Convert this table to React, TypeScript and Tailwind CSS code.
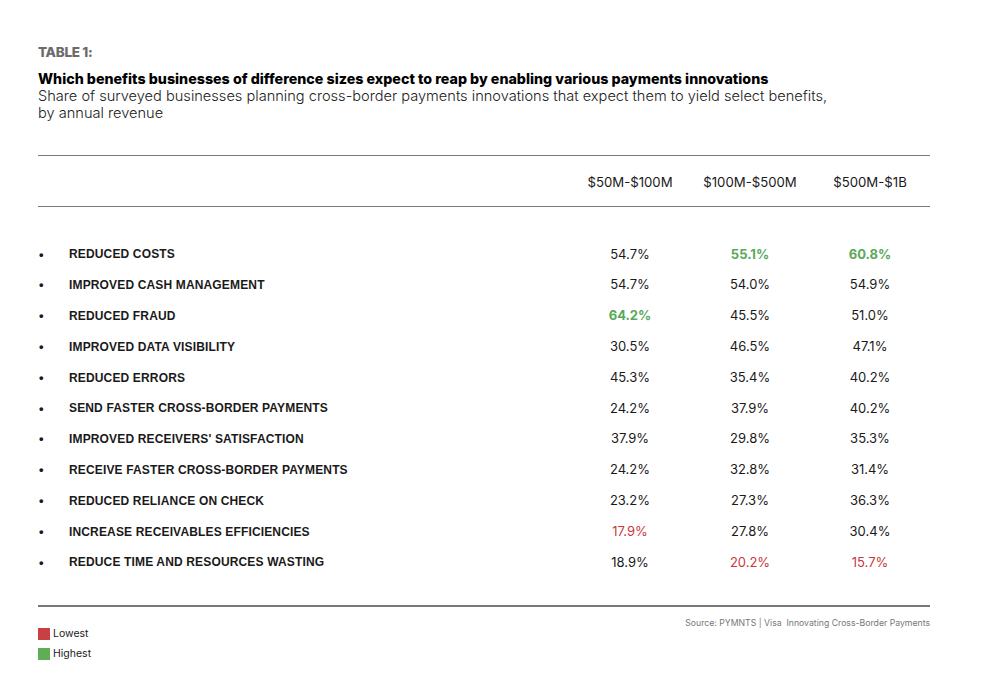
import { clsx } from 'clsx'

type Tone = 'low' | 'high' | undefined

interface Row {
  label: string
  values: [string, Tone][]
}

const rows: Row[] = [
  { label: 'REDUCED COSTS', values: [['54.7%', undefined], ['55.1%', 'high'], ['60.8%', 'high']] },
  { label: 'IMPROVED CASH MANAGEMENT', values: [['54.7%', undefined], ['54.0%', undefined], ['54.9%', undefined]] },
  { label: 'REDUCED FRAUD', values: [['64.2%', 'high'], ['45.5%', undefined], ['51.0%', undefined]] },
  { label: 'IMPROVED DATA VISIBILITY', values: [['30.5%', undefined], ['46.5%', undefined], ['47.1%', undefined]] },
  { label: 'REDUCED ERRORS', values: [['45.3%', undefined], ['35.4%', undefined], ['40.2%', undefined]] },
  { label: 'SEND FASTER CROSS-BORDER PAYMENTS', values: [['24.2%', undefined], ['37.9%', undefined], ['40.2%', undefined]] },
  { label: "IMPROVED RECEIVERS' SATISFACTION", values: [['37.9%', undefined], ['29.8%', undefined], ['35.3%', undefined]] },
  { label: 'RECEIVE FASTER CROSS-BORDER PAYMENTS', values: [['24.2%', undefined], ['32.8%', undefined], ['31.4%', undefined]] },
  { label: 'REDUCED RELIANCE ON CHECK', values: [['23.2%', undefined], ['27.3%', undefined], ['36.3%', undefined]] },
  { label: 'INCREASE RECEIVABLES EFFICIENCIES', values: [['17.9%', 'low'], ['27.8%', undefined], ['30.4%', undefined]] },
  { label: 'REDUCE TIME AND RESOURCES WASTING', values: [['18.9%', undefined], ['20.2%', 'low'], ['15.7%', 'low']] },
]

const columns = ['$50M-$100M', '$100M-$500M', '$500M-$1B']

const grid = 'grid grid-cols-[1fr_120px_120px_120px]'

export default function App() {
  return (
    <div className="min-h-[698px] w-[986px] bg-white pl-[38px] pr-[56px] pt-[44px] text-[#1a1a1a] font-['Inter',sans-serif]">
      <div className="text-[13.5px] font-extrabold leading-[16px] tracking-[-0.3px] text-[#6b6b6b]">TABLE 1:</div>

      <h1 className="mt-[10px] text-[14.25px] font-extrabold leading-[18px] text-black">
        Which benefits businesses of difference sizes expect to reap by enabling various payments innovations
      </h1>
      <p className="w-[820px] text-[14.6px] font-light leading-[17px] text-[#222]">
        Share of surveyed businesses planning cross-border payments innovations that expect them to yield select benefits,
        <br />
        by annual revenue
      </p>

      <div className="mt-[33px] border-t border-[#7a7a7a]">
        <div className={clsx(grid, 'h-[51px] items-center border-b border-[#7a7a7a] pt-[4px] text-[13.2px]')}>
          <div />
          {columns.map((c) => (
            <div key={c} className="text-center">
              {c}
            </div>
          ))}
        </div>

        <div className="pt-[32px] pb-[27px]">
          {rows.map((r) => (
            <div key={r.label} className={clsx(grid, 'h-[30.8px] items-center')}>
              <div className="flex items-center font-['Liberation_Sans',Arial,sans-serif] text-[12px] font-bold tracking-[0.15px]">
                <span className="w-[31px] pl-[1px] text-[13px]">•</span>
                <span>{r.label}</span>
              </div>
              {r.values.map(([v, tone], i) => (
                <div
                  key={i}
                  className={clsx(
                    'text-center text-[13px]',
                    tone === 'high' && 'font-bold text-[#5aa85a]',
                    tone === 'low' && 'text-[#c8383d]'
                  )}
                >
                  {v}
                </div>
              ))}
            </div>
          ))}
        </div>
      </div>

      <div className="border-t-2 border-[#777]">
        <div className="flex justify-between pt-[9px]">
          <div className="flex flex-col gap-[8px] pt-[12px] text-[10.5px] leading-[12px]">
            <div className="flex items-center gap-[3px]">
              <span className="h-[12px] w-[12px] bg-[#c84043]" />
              <span>Lowest</span>
            </div>
            <div className="flex items-center gap-[3px]">
              <span className="h-[12px] w-[12px] bg-[#5fad56]" />
              <span>Highest</span>
            </div>
          </div>
          <div className="text-[8.7px] leading-[14px] text-[#777]">
            Source: PYMNTS | Visa&nbsp; Innovating Cross-Border Payments
          </div>
        </div>
      </div>
    </div>
  )
}
